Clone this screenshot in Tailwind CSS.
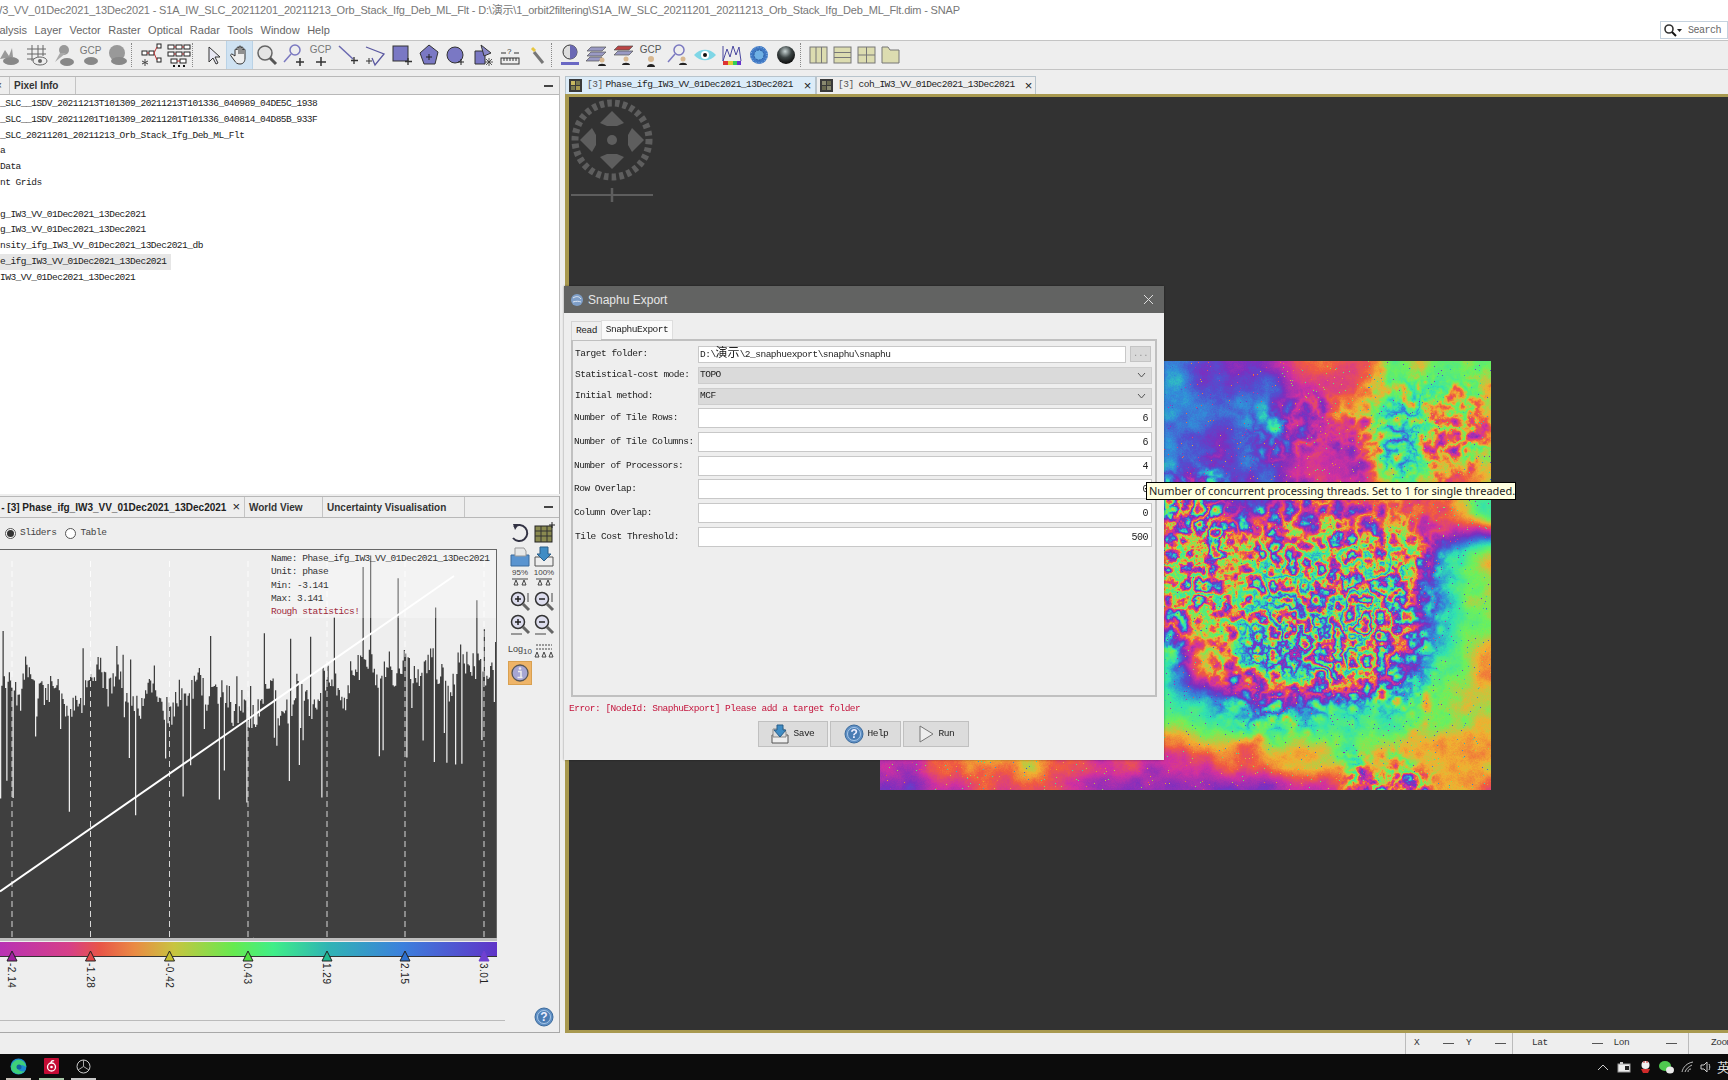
<!DOCTYPE html>
<html lang="en">
<head>
  <meta charset="UTF-8" />
  <title>SNAP</title>
  <script src="https://cdn.jsdelivr.net/npm/@tailwindcss/browser@4"></script>
</head>
<body class="bg-[#eeeeee]">
<div class="w-[1728px] h-[1080px] overflow-hidden flex flex-col bg-[#eeeeee] text-[#222] text-[9.5px] tracking-[-0.5px] font-['Liberation_Mono','Noto_Sans_CJK_SC',monospace]">

  <!-- title bar -->
  <div class="h-5 bg-white flex items-center whitespace-nowrap overflow-hidden text-[#777] text-[11px] tracking-[-0.17px] font-['Liberation_Sans','Noto_Sans_CJK_SC',sans-serif]">
    <span class="ml-[-8px]">W3_VV_01Dec2021_13Dec2021 - S1A_IW_SLC_20211201_20211213_Orb_Stack_Ifg_Deb_ML_Flt - D:\演示\1_orbit2filtering\S1A_IW_SLC_20211201_20211213_Orb_Stack_Ifg_Deb_ML_Flt.dim - SNAP</span>
  </div>

  <!-- menu bar -->
  <div class="h-5 bg-white flex items-center justify-between">
    <div class="flex gap-[7.5px] text-[#666] text-[11px] tracking-normal font-['Liberation_Sans',sans-serif]">
      <span class="ml-[-14px]">Analysis</span><span>Layer</span><span>Vector</span><span>Raster</span><span>Optical</span><span>Radar</span><span>Tools</span><span>Window</span><span>Help</span>
    </div>
    <div class="w-[68px] h-[18px] bg-white border border-[#c5d2de] flex items-center whitespace-nowrap overflow-hidden text-[#666] text-[10px]">
      <svg class="w-[20px] h-[14px] ml-[2px] shrink-0" viewBox="0 0 20 14"><circle cx="6" cy="6" r="4" fill="none" stroke="#333" stroke-width="1.6"/><path d="M9 9l4 4" stroke="#111" stroke-width="2"/><path d="M14 6h5l-2.500 3z" fill="#222"/></svg>
      <span class="ml-[5px]">Search (Ctrl+I)</span>
    </div>
  </div>

  <!-- toolbar -->
  <div class="h-[30px] border-y border-[#c4c4c4] flex items-center overflow-hidden shrink-0 text-[#777] tracking-normal font-['Liberation_Sans',sans-serif]">
    <div class="flex items-center ml-[-4px]">
      <div class="w-[27px] h-[27px] flex items-center justify-center"><svg class="w-6 h-6" viewBox="0 0 24 24"><path d="M2 16l5-9 4 6 3-8 1 9z" fill="#999"/><ellipse cx="13" cy="18" rx="8" ry="4" fill="#888"/></svg></div>
      <div class="w-[27px] h-[27px] flex items-center justify-center"><svg class="w-6 h-6" viewBox="0 0 24 24"><path d="M7 2v16M13 2v16M18 2v11M2 6h19M2 11h19M2 16h8" stroke="#666" fill="none"/><ellipse cx="15" cy="18" rx="7" ry="4" fill="#eee" stroke="#666"/><circle cx="15" cy="18" r="2" fill="#666"/></svg></div>
      <div class="w-[27px] h-[27px] flex items-center justify-center"><svg class="w-6 h-6" viewBox="0 0 24 24"><circle cx="12" cy="7" r="5" fill="#999"/><path d="M3 19l5-9h6z" fill="#aaa"/><ellipse cx="15" cy="19" rx="7" ry="4" fill="#888"/></svg></div>
      <div class="w-[27px] h-[27px] flex flex-col items-center justify-center"><span class="text-[10px] leading-[11px]">GCP</span><svg class="w-6 h-[10px]" viewBox="0 0 24 10"><ellipse cx="12" cy="5" rx="7" ry="4" fill="#888"/></svg></div>
      <div class="w-[27px] h-[27px] flex items-center justify-center"><svg class="w-6 h-6" viewBox="0 0 24 24"><circle cx="11" cy="10" r="8" fill="#999"/><ellipse cx="13" cy="18" rx="8" ry="4" fill="#888"/></svg></div>
      <div class="w-[7px] h-[24px] border-l border-dotted border-[#888]"></div>
      <div class="w-[27px] h-[27px] flex items-center justify-center"><svg class="w-6 h-6" viewBox="0 0 24 24"><g fill="#fff" stroke="#222"><rect x="2" y="8" width="5" height="4"/><rect x="9" y="8" width="5" height="4"/><rect x="17" y="1" width="4" height="4"/><rect x="17" y="15" width="4" height="4"/></g><path d="M14 10l3-6M14 10l3 7M7 10h2" stroke="#b33"/><path d="M5 16v7M2 18l6 3M8 18l-6 3" stroke="#444"/></svg></div>
      <div class="w-[27px] h-[27px] flex items-center justify-center"><svg class="w-6 h-6" viewBox="0 0 24 24"><g fill="#fff" stroke="#222"><rect x="1" y="2" width="6" height="4"/><rect x="9" y="2" width="6" height="4"/><rect x="17" y="2" width="6" height="4"/><rect x="1" y="9" width="6" height="4"/><rect x="9" y="9" width="6" height="4"/><rect x="17" y="9" width="6" height="4"/><rect x="4" y="16" width="6" height="4"/><rect x="13" y="16" width="6" height="4"/></g><path d="M7 4h2M15 4h2M7 11h2M15 11h2M10 18h3" stroke="#b33"/><path d="M6 23h2M11 23h2M16 23h2" stroke="#111" stroke-width="2"/></svg></div>
      <div class="w-[7px] h-[24px] border-l border-dotted border-[#888]"></div>
      <div class="w-[27px] h-[27px] flex items-center justify-center"><svg class="w-6 h-6" viewBox="0 0 24 24"><path d="M8 4v15l4-4 3 6 2-1-3-6h5z" fill="#e8e8f4" stroke="#333"/></svg></div>
      <div class="w-[27px] h-[30px] flex items-center justify-center bg-[#cfe2f2] border border-[#b9d2e6]"><svg class="w-6 h-6" viewBox="0 0 24 24"><path d="M7 13V7a1 1 0 012 0V5a1 1 0 012 0v-1a1 1 0 012 0v1a1 1 0 012 0v2a1 1 0 012 0v8c0 4-2 6-5 6-3 0-4-1-6-4l-3-4c-1-1 0-2 1-2z" fill="#eee" stroke="#333"/><path d="M11 5v6M13 5v6M15 6v5" stroke="#333"/></svg></div>
      <div class="w-[27px] h-[27px] flex items-center justify-center"><svg class="w-6 h-6" viewBox="0 0 24 24"><circle cx="10" cy="10" r="7" fill="#e4e4e4" stroke="#666" stroke-width="1.500"/><path d="M15 15l6 6" stroke="#555" stroke-width="3"/></svg></div>
      <div class="w-[27px] h-[27px] flex items-center justify-center"><svg class="w-6 h-6" viewBox="0 0 24 24"><circle cx="13" cy="7" r="5" fill="#eee" stroke="#7a78c0" stroke-width="1.500"/><path d="M9 11l-7 8" stroke="#7a78c0" stroke-width="1.500"/><path d="M18 15v8M14 19h8" stroke="#333" stroke-width="1.500"/></svg></div>
      <div class="w-[27px] h-[27px] flex flex-col items-center justify-center"><span class="text-[10px] leading-[11px]">GCP</span><svg class="w-6 h-[12px]" viewBox="0 0 24 12"><path d="M12 2v9M7 7h10" stroke="#333" stroke-width="1.500"/></svg></div>
      <div class="w-[27px] h-[27px] flex items-center justify-center"><svg class="w-6 h-6" viewBox="0 0 24 24"><path d="M3 3l14 13" stroke="#6a68b0" stroke-width="1.500"/><path d="M18 14v7M15 17.500h7" stroke="#333" stroke-width="1.300"/></svg></div>
      <div class="w-[27px] h-[27px] flex items-center justify-center"><svg class="w-6 h-6" viewBox="0 0 24 24"><path d="M3 4l18 7-9 11-3-7" fill="none" stroke="#5a58a0" stroke-width="1.300"/><path d="M6 15v6M3 18h6" stroke="#333"/></svg></div>
      <div class="w-[27px] h-[27px] flex items-center justify-center"><svg class="w-6 h-6" viewBox="0 0 24 24"><rect x="3" y="3" width="15" height="15" fill="#7a78c4" stroke="#333"/><path d="M18 15v7M15 18.500h7" stroke="#333" stroke-width="1.300"/></svg></div>
      <div class="w-[27px] h-[27px] flex items-center justify-center"><svg class="w-6 h-6" viewBox="0 0 24 24"><path d="M12 2l9 7-3 12H7L3 10z" fill="#7a78c4" stroke="#333"/><path d="M12 11v6M9 14h6" stroke="#222"/></svg></div>
      <div class="w-[27px] h-[27px] flex items-center justify-center"><svg class="w-6 h-6" viewBox="0 0 24 24"><circle cx="11" cy="12" r="8" fill="#7a78c4" stroke="#333"/><path d="M17 16v6M14 19h6" stroke="#222"/></svg></div>
      <div class="w-[27px] h-[27px] flex items-center justify-center"><svg class="w-6 h-6" viewBox="0 0 24 24"><path d="M4 8h10v13H4z" fill="#7a78c4" stroke="#333"/><path d="M10 2l10 8-7 3z" fill="#8a88c8" stroke="#333"/><path d="M18 15v8M14 19h8M15 16l6 6M21 16l-6 6" stroke="#333" stroke-width=".8"/></svg></div>
      <div class="w-[27px] h-[27px] flex items-center justify-center"><svg class="w-6 h-6" viewBox="0 0 24 24"><rect x="3" y="15" width="18" height="6" fill="#eee" stroke="#333"/><path d="M6 15v3M9 15v3M12 15v3M15 15v3M18 15v3M3 10h5M16 10h5" stroke="#333"/><text x="9" y="11" font-size="8" fill="#333">?</text></svg></div>
      <div class="w-[27px] h-[27px] flex items-center justify-center"><svg class="w-6 h-6" viewBox="0 0 24 24"><path d="M9 9l9 11" stroke="#777" stroke-width="3"/><path d="M7 5l3 3" stroke="#e6c640" stroke-width="3"/></svg></div>
      <div class="w-[7px] h-[24px] border-l border-dotted border-[#888] ml-[1px]"></div>
      <div class="w-[27px] h-[27px] ml-[-2px] flex items-center justify-center"><svg class="w-6 h-6" viewBox="0 0 24 24"><circle cx="12" cy="9" r="7" fill="#ddd" stroke="#333"/><path d="M12 2a7 7 0 010 14z" fill="#6a68b4"/><rect x="3" y="19" width="18" height="3" fill="#6a68c4"/></svg></div>
      <div class="w-[27px] h-[27px] flex items-center justify-center"><svg class="w-6 h-6" viewBox="0 0 24 24"><path d="M6 4h15l-4 4H2zM6 9h15l-4 4H2zM5 14h12l-3 4H1z" fill="#9a9ac4" stroke="#555" stroke-width=".7"/><circle cx="17" cy="17" r="2.500" fill="#d8b890"/><path d="M13 23c0-3 8-3 8 0z" fill="#222"/></svg></div>
      <div class="w-[27px] h-[27px] flex items-center justify-center"><svg class="w-6 h-6" viewBox="0 0 24 24"><path d="M6 3h15l-4 4H2z" fill="#b44" stroke="#555" stroke-width=".7"/><path d="M6 8h15l-4 4H2z" fill="#9a9ac4" stroke="#555" stroke-width=".7"/><circle cx="14" cy="16" r="2.500" fill="#d8b890"/><path d="M10 22c0-3 8-3 8 0z" fill="#222"/></svg></div>
      <div class="w-[27px] h-[27px] flex flex-col items-center justify-center"><span class="text-[10px] leading-[11px] text-[#555]">GCP</span><svg class="w-6 h-[12px]" viewBox="0 0 24 12"><circle cx="12" cy="4" r="3" fill="#d8b890"/><path d="M8 12c0-4 8-4 8 0z" fill="#222"/></svg></div>
      <div class="w-[27px] h-[27px] flex items-center justify-center"><svg class="w-6 h-6" viewBox="0 0 24 24"><circle cx="13" cy="7" r="5" fill="#eee" stroke="#7a78c0" stroke-width="1.500"/><path d="M9 11l-7 8" stroke="#7a78c0" stroke-width="1.500"/><circle cx="17" cy="16" r="2.500" fill="#d8b890"/><path d="M13 22c0-3 8-3 8 0z" fill="#222"/></svg></div>
      <div class="w-[27px] h-[27px] flex items-center justify-center"><svg class="w-6 h-6" viewBox="0 0 24 24"><path d="M1 12c6-7 16-7 22 0-6 7-16 7-22 0z" fill="#7fd6e6"/><circle cx="12" cy="12" r="4" fill="#fff"/><circle cx="12" cy="12" r="2" fill="#111"/></svg></div>
      <div class="w-[27px] h-[27px] flex items-center justify-center"><svg class="w-6 h-6" viewBox="0 0 24 24"><path d="M3 18V3M3 18L7 6l3 8 3-11 3 9 3-8 2 14" fill="none" stroke="#4a48a0"/><rect x="3" y="18" width="5" height="4" fill="#d33"/><rect x="8" y="18" width="5" height="4" fill="#dc3"/><rect x="13" y="18" width="4" height="4" fill="#3c5"/><rect x="17" y="18" width="4" height="4" fill="#63c"/></svg></div>
      <div class="w-[27px] h-[27px] flex items-center justify-center"><svg class="w-6 h-6" viewBox="0 0 24 24"><circle cx="12" cy="12" r="9" fill="#3f78c4"/><circle cx="12" cy="12" r="5" fill="#6fb0e4" stroke="#2a5a9c" stroke-dasharray="2 1"/><circle cx="12" cy="12" r="8" fill="none" stroke="#9cc4ea" stroke-dasharray="1 2"/></svg></div>
      <div class="w-[27px] h-[27px] flex items-center justify-center"><svg class="w-6 h-6" viewBox="0 0 24 24"><defs><radialGradient id="ball" cx=".45" cy=".3" r=".7"><stop offset="0" stop-color="#c8d4d4"/><stop offset=".5" stop-color="#3c4444"/><stop offset="1" stop-color="#0c0c0c"/></radialGradient></defs><circle cx="12" cy="12" r="9" fill="url(#ball)"/></svg></div>
      <div class="w-[7px] h-[24px] border-l border-dotted border-[#888] ml-[1px]"></div>
      <div class="w-[24px] h-[27px] flex items-center justify-center"><svg class="w-5 h-5" viewBox="0 0 20 20"><rect x="1" y="2" width="17" height="16" fill="#dcdcb0" stroke="#777"/><path d="M7 2v16M12.500 2v16" stroke="#777"/></svg></div>
      <div class="w-[24px] h-[27px] flex items-center justify-center"><svg class="w-5 h-5" viewBox="0 0 20 20"><rect x="1" y="2" width="17" height="16" fill="#dcdcb0" stroke="#777"/><path d="M1 7.500h17M1 12.500h17" stroke="#777"/></svg></div>
      <div class="w-[24px] h-[27px] flex items-center justify-center"><svg class="w-5 h-5" viewBox="0 0 20 20"><rect x="1" y="2" width="17" height="16" fill="#dcdcb0" stroke="#777"/><path d="M1 10h17M9.500 2v16" stroke="#777"/></svg></div>
      <div class="w-[24px] h-[27px] flex items-center justify-center"><svg class="w-5 h-5" viewBox="0 0 20 20"><path d="M1 2h6l2 3h9v13H1z" fill="#dcdcb0" stroke="#777"/></svg></div>
    </div>
  </div>

  <!-- panes -->
  <div class="flex-1 min-h-0 flex pt-[6px]">

    <!-- left column -->
    <div class="w-[560px] shrink-0 flex flex-col gap-[2px]">
      <div class="h-[418px] flex flex-col border-r border-[#bbb]">
        <div class="h-[19px] border-y border-[#b8b8b8] flex items-stretch text-[10px] font-bold tracking-normal text-[#333] font-['Liberation_Sans',sans-serif]">
          <span class="w-[9px] flex items-center font-normal overflow-hidden"><span class="ml-[-4px]">×</span></span>
          <span class="w-[67px] pl-[4px] flex items-center border-x border-[#c4c4c4]">Pixel Info</span>
          <span class="ml-auto mr-[6px] self-center w-[9px] h-[2px] bg-[#444]"></span>
        </div>
        <div class="flex-1 bg-white flex flex-col pt-[1px] leading-[15.800px] whitespace-nowrap overflow-hidden">
          <div>_SLC__1SDV_20211213T101309_20211213T101336_040989_04DE5C_1938</div>
          <div>_SLC__1SDV_20211201T101309_20211201T101336_040814_04D85B_933F</div>
          <div>_SLC_20211201_20211213_Orb_Stack_Ifg_Deb_ML_Flt</div>
          <div>a</div>
          <div>Data</div>
          <div>nt Grids</div>
          <div class="h-[15.800px]"></div>
          <div>g_IW3_VV_01Dec2021_13Dec2021</div>
          <div>g_IW3_VV_01Dec2021_13Dec2021</div>
          <div>nsity_ifg_IW3_VV_01Dec2021_13Dec2021_db</div>
          <div class="w-[171px] bg-[#e6e6e6]">e_ifg_IW3_VV_01Dec2021_13Dec2021</div>
          <div>IW3_VV_01Dec2021_13Dec2021</div>
        </div>
      </div>

      <div class="flex-1 min-h-0 flex flex-col border-r border-b border-[#a8a8a8]">
        <div class="h-[22px] shrink-0 border-y border-[#b8b8b8] flex items-stretch whitespace-nowrap text-[10px] font-bold tracking-normal text-[#222] font-['Liberation_Sans',sans-serif]">
          <div class="w-[245px] overflow-hidden flex items-center justify-end pr-[4px] border-r border-[#c4c4c4]"><span>on - [3] Phase_ifg_IW3_VV_01Dec2021_13Dec2021</span><span class="ml-[6px] font-normal text-[13px]">×</span></div>
          <div class="w-[78px] pl-[4px] flex items-center border-r border-[#c4c4c4] text-[#333]">World View</div>
          <div class="w-[142px] pl-[4px] flex items-center border-r border-[#c4c4c4] text-[#333]">Uncertainty Visualisation</div>
          <span class="ml-auto mr-[6px] self-center w-[9px] h-[2px] bg-[#444]"></span>
        </div>
        <div class="flex-1 min-h-0 flex">
          <div class="w-[505px] shrink-0 flex flex-col">
            <div class="h-[31px] shrink-0 flex items-center gap-[4px] pl-[5px] text-[#444]">
              <span class="w-[11px] h-[11px] rounded-full border border-[#555] bg-white flex items-center justify-center"><span class="w-[7px] h-[7px] rounded-full bg-[#333]"></span></span>
              <span>Sliders</span>
              <span class="w-[11px] h-[11px] rounded-full border border-[#555] bg-white ml-[5px]"></span>
              <span>Table</span>
            </div>
            <div class="relative h-[441px] shrink-0">
              <svg width="497" height="441" viewBox="0 0 497 441" class="block">
                <defs>
                  <linearGradient id="bar"><stop offset="0" stop-color="#b832b4"/><stop offset=".14" stop-color="#d64088"/><stop offset=".2" stop-color="#e85548"/><stop offset=".27" stop-color="#ea8a44"/><stop offset=".35" stop-color="#c8c440"/><stop offset=".47" stop-color="#66ea50"/><stop offset=".55" stop-color="#40ee88"/><stop offset=".66" stop-color="#30b4b4"/><stop offset=".81" stop-color="#3c80dc"/><stop offset="1" stop-color="#6034c8"/></linearGradient>
                </defs>
                <rect width="497" height="389" fill="#eeeeee"/>
                <path id="hist" fill="#3f3f3f" d=""/>
                <path d="M0 342.500L454 27" stroke="#fff" stroke-width="2" fill="none"/>
                <path d="M12 12V389M90.500 12V389M169.500 12V389M248 12V389M327 12V389M405 12V389M484 12V389" stroke="#fff" stroke-opacity=".8" stroke-dasharray="6 4" fill="none"/>
                <path d="M0 .500H497M496.500 0V389" stroke="#666" fill="none"/>
                <rect y="389" width="497" height="3" fill="#bdbdbd"/>
                <rect y="393" width="497" height="15" fill="url(#bar)"/>
                <path d="M0 407.500H497" stroke="#333"/>
                <g stroke="#222">
                  <path d="M12 402l5 10H7z" fill="#a020a0"/><path d="M90.500 402l5 10h-10z" fill="#e24848"/><path d="M169.500 402l5 10h-10z" fill="#c4c030"/><path d="M248 402l5 10h-10z" fill="#50e040"/><path d="M327 402l5 10h-10z" fill="#20b890"/><path d="M405 402l5 10h-10z" fill="#2c70d0"/><path d="M484 402l5 10h-10z" fill="#7040d0" stroke="#7040d0"/>
                </g>
                <g font-family="Liberation Sans" font-size="10" letter-spacing=".5" fill="#222">
                  <text transform="translate(8 414) rotate(90)">-2.14</text>
                  <text transform="translate(86.500 414) rotate(90)">-1.28</text>
                  <text transform="translate(165.500 414) rotate(90)">-0.42</text>
                  <text transform="translate(244 414) rotate(90)">0.43</text>
                  <text transform="translate(323 414) rotate(90)">1.29</text>
                  <text transform="translate(401 414) rotate(90)">2.15</text>
                  <text transform="translate(480 414) rotate(90)">3.01</text>
                </g>
              </svg>
              <div class="absolute left-[270px] top-[1px] w-[226px] h-[68px] bg-white/30 pl-[1px] pt-[2px] leading-[13.300px] text-[#333] whitespace-nowrap">
                <div>Name: Phase_ifg_IW3_VV_01Dec2021_13Dec2021</div>
                <div>Unit: phase</div>
                <div>Min: -3.141</div>
                <div>Max: 3.141</div>
                <div class="text-[#a02a3c]">Rough statistics!</div>
              </div>
            </div>
            <div class="h-[31px] border-b border-[#bbb]"></div>
          </div>

          <!-- histogram tools -->
          <div class="flex-1 flex flex-col pt-[3px] pl-[3px] text-[#444] tracking-normal font-['Liberation_Sans',sans-serif]">
            <div class="h-[24px] flex">
              <svg class="w-6 h-6" viewBox="0 0 24 24"><path d="M6 6a8 8 0 11-1 11" fill="none" stroke="#334" stroke-width="2"/><path d="M5 3l6 0-4 6z" fill="#334"/></svg>
              <svg class="w-6 h-6" viewBox="0 0 24 24"><rect x="3" y="5" width="17" height="16" fill="#8a8a50" stroke="#222"/><path d="M3 10h17M3 15h17M9 5v16M15 5v16" stroke="#333"/><path d="M20 1v6M17 4h6" stroke="#222"/></svg>
            </div>
            <div class="h-[23px] flex">
              <svg class="w-6 h-6" viewBox="0 0 24 24"><path d="M3 10h18v11H3z" fill="#5a94d0" stroke="#3a6a9c"/><path d="M7 3h9l2 3v5H7z" fill="#e8e8e8" stroke="#999"/></svg>
              <svg class="w-6 h-6" viewBox="0 0 24 24"><path d="M3 12h18v9H3z" fill="#eee" stroke="#555"/><path d="M8 2h8v7h3l-7 7-7-7h3z" fill="#3f8cc4" stroke="#2a5e88"/></svg>
            </div>
            <div class="h-[21px] flex">
              <div class="w-6 flex flex-col items-center text-[8px] leading-[9px]"><span>95%</span><svg class="w-5 h-[9px]" viewBox="0 0 20 9"><path d="M2 2h16M4 8l2-5 2 5zM12 8l2-5 2 5z" fill="none" stroke="#444"/></svg></div>
              <div class="w-6 flex flex-col items-center text-[8px] leading-[9px]"><span>100%</span><svg class="w-5 h-[9px]" viewBox="0 0 20 9"><path d="M2 2h16M4 8l2-5 2 5zM12 8l2-5 2 5z" fill="none" stroke="#444"/></svg></div>
            </div>
            <div class="h-[24px] flex">
              <svg class="w-6 h-6" viewBox="0 0 24 24"><circle cx="10" cy="10" r="6.500" fill="#dde" stroke="#333" stroke-width="1.500"/><path d="M7 10h6M10 7v6" stroke="#222" stroke-width="1.500"/><path d="M15 15l6 6" stroke="#666" stroke-width="3"/><path d="M20 4v9" stroke="#444"/></svg>
              <svg class="w-6 h-6" viewBox="0 0 24 24"><circle cx="10" cy="10" r="6.500" fill="#dde" stroke="#333" stroke-width="1.500"/><path d="M7 10h6" stroke="#222" stroke-width="1.500"/><path d="M15 15l6 6" stroke="#666" stroke-width="3"/><path d="M20 4v9" stroke="#444"/></svg>
            </div>
            <div class="h-[25px] flex">
              <svg class="w-6 h-6" viewBox="0 0 24 24"><circle cx="10" cy="9" r="6.500" fill="#dde" stroke="#333" stroke-width="1.500"/><path d="M7 9h6M10 6v6" stroke="#222" stroke-width="1.500"/><path d="M15 14l6 6" stroke="#666" stroke-width="3"/><path d="M3 21h11" stroke="#444"/></svg>
              <svg class="w-6 h-6" viewBox="0 0 24 24"><circle cx="10" cy="9" r="6.500" fill="#dde" stroke="#333" stroke-width="1.500"/><path d="M7 9h6" stroke="#222" stroke-width="1.500"/><path d="M15 14l6 6" stroke="#666" stroke-width="3"/><path d="M3 21h11" stroke="#444"/></svg>
            </div>
            <div class="h-[23px] flex items-center">
              <span class="w-6 text-[9px] leading-none text-center whitespace-nowrap">Log<sub class="text-[8px]">10</sub></span>
              <svg class="w-6 h-6" viewBox="0 0 24 24"><path d="M4 7h16M4 11h16" stroke="#444" stroke-dasharray="2 1"/><path d="M3 19l2-5 2 5zM10 19l2-5 2 5zM17 19l2-5 2 5z" fill="none" stroke="#444"/></svg>
            </div>
            <div class="w-[24px] h-[24px] bg-[#eeb468] border border-[#d9a050] flex items-center justify-center">
              <svg class="w-5 h-5" viewBox="0 0 20 20"><circle cx="10" cy="10" r="8" fill="#a6a6d4" stroke="#555" stroke-width="1.300"/><circle cx="10" cy="5.500" r="1.300" fill="#eee"/><path d="M8 8.500h3v6h1.500M7.500 14.500h3" stroke="#eee" stroke-width="1.500" fill="none"/></svg>
            </div>
            <svg class="w-[20px] h-[20px] mt-auto mb-[5px] ml-[26px]" viewBox="0 0 20 20"><circle cx="10" cy="10" r="9" fill="#5f8fc4" stroke="#3a6a9c"/><circle cx="10" cy="10" r="6.500" fill="#4a7cb4" stroke="#a8c8e8"/><text x="10" y="14" text-anchor="middle" font-size="12" font-weight="700" fill="#eef">?</text></svg>
          </div>
        </div>
      </div>
    </div>

    <!-- document area -->
    <div class="ml-[5px] flex-1 min-w-0 flex flex-col">
      <div class="h-[18px] shrink-0 flex items-stretch whitespace-nowrap text-[#222]">
        <div class="w-[251px] bg-[#dcecf8] border border-b-0 border-[#b8c4cc] flex items-center pl-[3px]">
          <svg class="w-[13px] h-[13px]" viewBox="0 0 13 13"><rect width="13" height="13" fill="#3a3a3a"/><path d="M2 2h4v4H2z" fill="#c8b860"/><path d="M7 2h4v4H7z" fill="#7a7a50"/><path d="M2 7h4v4H2z" fill="#7a7a50"/><path d="M7 7h4v4H7z" fill="#a89a50"/></svg>
          <span class="ml-[5px] text-[#555]">[3]</span><span class="ml-[3px]">Phase_ifg_IW3_VV_01Dec2021_13Dec2021</span>
          <span class="ml-[11px] text-[13px] tracking-normal font-['Liberation_Sans',sans-serif]">×</span>
        </div>
        <div class="w-[220px] bg-[#eeeeee] border border-b-0 border-[#b8c4cc] flex items-center pl-[3px]">
          <svg class="w-[13px] h-[13px]" viewBox="0 0 13 13"><rect width="13" height="13" fill="#3a3a3a"/><path d="M2 2h4v4H2z" fill="#8a8a70"/><path d="M7 2h4v4H7z" fill="#6a6a50"/><path d="M2 7h4v4H2z" fill="#6a6a50"/><path d="M7 7h4v4H7z" fill="#8a8a70"/></svg>
          <span class="ml-[5px] text-[#555]">[3]</span><span class="ml-[5px]">coh_IW3_VV_01Dec2021_13Dec2021</span>
          <span class="ml-[10px] text-[13px] tracking-normal font-['Liberation_Sans',sans-serif]">×</span>
        </div>
      </div>

      <div class="relative flex-1 min-h-0 bg-[#323232] border-l-[4px] border-t-[3px] border-b-[3px] border-[#a8994f]">
        <svg class="absolute left-[1px] top-[2px]" width="84" height="106" viewBox="0 0 84 106">
          <circle cx="42" cy="41" r="37" fill="none" stroke="#5e5e5e" stroke-width="7" stroke-dasharray="4.500 3.200"/>
          <g fill="#5e5e5e"><path d="M42 12L54 24 47 27H37L30 24z"/><path d="M42 70L30 58 37 55H47L54 58z"/><path d="M10 41L22 29 26 36V46L22 53z"/><path d="M74 41L62 29 58 36V46L62 53z"/><circle cx="42" cy="41" r="5"/></g>
          <path d="M1 96H83" stroke="#5e5e5e" stroke-width="2"/><path d="M42 89v14" stroke="#5e5e5e" stroke-width="2.500"/>
        </svg>

        <canvas id="ifg" width="611" height="429" class="absolute left-[311px] top-[264px] w-[611px] h-[429px]"></canvas>

        <!-- snaphu export dialog -->
        <div class="absolute left-[-5px] top-[189px] w-[600px] h-[474px] bg-[#eeeeee] flex flex-col shadow-[0_0_2px_rgba(0,0,0,0.4)]">
          <div class="h-[27px] shrink-0 bg-[#626362] flex items-center pl-[7px] pr-[10px] text-[#e6e6e6] text-[12px] tracking-normal font-['Liberation_Sans',sans-serif]">
            <svg class="w-[12px] h-[12px]" viewBox="0 0 12 12"><circle cx="6" cy="6" r="6" fill="#7f9fc8"/><path d="M2 4c3-2 6-2 8 1M2 8c3-1 6-1 8 0" stroke="#dfe8f4" fill="none"/></svg>
            <span class="ml-[5px]">Snaphu Export</span>
            <svg class="ml-auto w-[11px] h-[11px]" viewBox="0 0 11 11"><path d="M1 1l9 9M10 1l-9 9" stroke="#ddd"/></svg>
          </div>
          <div class="h-[19px] shrink-0 flex items-stretch pl-[7px] pt-[7px] box-content">
            <div class="w-[30px] flex items-center justify-center bg-[#eeeeee] border-t border-l border-[#d4d4d4] translate-y-[1px]">Read</div>
            <div class="w-[72px] flex items-center justify-center bg-[#fafafa] border-t border-x border-[#dedede]">SnaphuExport</div>
          </div>
          <div class="mx-[7px] h-[358px] shrink-0 border-2 border-[#c0c0c0] pt-[5px] pl-[1px] pr-[1px] flex flex-col whitespace-nowrap">
            <div class="flex h-[16px] mb-[5px] items-center">
              <span class="w-[124px] pl-[1px] shrink-0">Target folder:</span>
              <div class="w-[428px] h-[17px] bg-white border border-[#c8c8c8] flex items-center pl-[1px]"><span>D:\<span class="text-[12px] tracking-normal">演示</span>\2_snaphuexport\snaphu\snaphu</span></div>
              <div class="ml-[4px] w-[21px] h-[16px] bg-[#d8d8d8] border border-[#c4c4c4] flex items-center justify-center text-[#999]">...</div>
            </div>
            <div class="flex h-[16px] mb-[5px] items-center">
              <span class="w-[124px] pl-[1px] shrink-0">Statistical-cost mode:</span>
              <div class="w-[454px] h-[17px] bg-[#dadada] border border-[#cdcdcd] flex items-center justify-between px-[1px]"><span>TOPO</span><svg class="w-[9px] h-[6px] mr-[4px]" viewBox="0 0 9 6"><path d="M1 1l3.500 4L8 1" fill="none" stroke="#555"/></svg></div>
            </div>
            <div class="flex h-[16px] mb-[4px] items-center">
              <span class="w-[124px] pl-[1px] shrink-0">Initial method:</span>
              <div class="w-[454px] h-[17px] bg-[#dadada] border border-[#cdcdcd] flex items-center justify-between px-[1px]"><span>MCF</span><svg class="w-[9px] h-[6px] mr-[4px]" viewBox="0 0 9 6"><path d="M1 1l3.500 4L8 1" fill="none" stroke="#555"/></svg></div>
            </div>
            <div class="flex h-[20px] mb-[4px] items-center">
              <span class="w-[124px] shrink-0">Number of Tile Rows:</span>
              <div class="w-[454px] h-[20px] bg-white border border-[#c8c8c8] flex items-center justify-end pr-[3px] text-[10px]">6</div>
            </div>
            <div class="flex h-[20px] mb-[4px] items-center">
              <span class="w-[124px] shrink-0">Number of Tile Columns:</span>
              <div class="w-[454px] h-[20px] bg-white border border-[#c8c8c8] flex items-center justify-end pr-[3px] text-[10px]">6</div>
            </div>
            <div class="flex h-[20px] mb-[3px] items-center">
              <span class="w-[124px] shrink-0">Number of Processors:</span>
              <div class="w-[454px] h-[20px] bg-white border border-[#c8c8c8] flex items-center justify-end pr-[3px] text-[10px]">4</div>
            </div>
            <div class="flex h-[20px] mb-[4px] items-center">
              <span class="w-[124px] shrink-0">Row Overlap:</span>
              <div class="w-[454px] h-[20px] bg-white border border-[#c8c8c8] flex items-center justify-end pr-[3px] text-[10px]">0</div>
            </div>
            <div class="flex h-[20px] mb-[4px] items-center">
              <span class="w-[124px] shrink-0">Column Overlap:</span>
              <div class="w-[454px] h-[20px] bg-white border border-[#c8c8c8] flex items-center justify-end pr-[3px] text-[10px]">0</div>
            </div>
            <div class="flex h-[20px] items-center">
              <span class="w-[124px] pl-[1px] shrink-0">Tile Cost Threshold:</span>
              <div class="w-[454px] h-[20px] bg-white border border-[#c8c8c8] flex items-center justify-end pr-[3px] text-[10px]">500</div>
            </div>
          </div>
          <div class="h-[24px] shrink-0 flex items-center pl-[5px] pt-[1px] text-[#c4143c]">Error: [NodeId: SnaphuExport] Please add a target folder</div>
          <div class="flex justify-center gap-[2px] ml-[-2px]">
            <div class="w-[70px] h-[26px] bg-[#dcdcdc] border border-[#c0c0c0] flex items-center pl-[11px] gap-[4px]"><svg class="w-[20px] h-[20px]" viewBox="0 0 20 20"><path d="M2 11h16v8H2z" fill="#eee" stroke="#555"/><path d="M3 5h11l2 3v5H3z" fill="#dcdcdc" stroke="#888"/><path d="M7 1h6v5h3l-6 7-6-7h3z" fill="#3f8cc4" stroke="#2a5e88"/></svg><span>Save</span></div>
            <div class="w-[71px] h-[26px] bg-[#dcdcdc] border border-[#c0c0c0] flex items-center pl-[13px] gap-[4px]"><svg class="w-[20px] h-[20px]" viewBox="0 0 20 20"><circle cx="10" cy="10" r="9" fill="#5f8fc4" stroke="#3a6a9c"/><circle cx="10" cy="10" r="6.500" fill="#4a7cb4" stroke="#a8c8e8"/><text x="10" y="14" text-anchor="middle" font-size="12" font-weight="700" fill="#eef" font-family="Liberation Sans">?</text></svg><span>Help</span></div>
            <div class="w-[66px] h-[26px] bg-[#dcdcdc] border border-[#c0c0c0] flex items-center pl-[15px] gap-[5px]"><svg class="w-[15px] h-[18px]" viewBox="0 0 15 18"><path d="M1 1l13 8-13 8z" fill="#eee" stroke="#777"/></svg><span>Run</span></div>
          </div>
        </div>

        <!-- tooltip -->
        <div class="absolute left-[577px] top-[385px] w-[370px] h-[18px] bg-[#ffffe1] border border-black flex items-center pl-[2px] whitespace-nowrap text-[#222] text-[11px] tracking-normal font-['Noto_Sans',sans-serif]">Number of concurrent processing threads. Set to 1 for single threaded.</div>
      </div>
    </div>
  </div>

  <!-- status bar -->
  <div class="h-[21px] shrink-0 flex items-center justify-end text-[#333] whitespace-nowrap">
    <div class="w-[107px] h-[21px] border-l border-[#bbb] flex items-center pl-[8px]"><span class="w-[7px]">X</span><span class="w-[11px] h-px bg-[#555] ml-[22px]"></span><span class="ml-[12px]">Y</span><span class="w-[11px] h-px bg-[#555] ml-[24px]"></span></div>
    <div class="w-[176px] h-[21px] border-l border-[#bbb] flex items-center pl-[19px]"><span>Lat</span><span class="w-[11px] h-px bg-[#555] ml-[44px]"></span><span class="ml-[11px]">Lon</span><span class="w-[11px] h-px bg-[#555] ml-[37px]"></span></div>
    <div class="w-[40px] h-[21px] border-l border-[#bbb] flex items-center pl-[22px] overflow-hidden"><span>Zoom</span></div>
  </div>

  <!-- windows taskbar -->
  <div class="h-[26px] shrink-0 bg-[#0c0c0c] flex items-center relative">
    <div class="flex ml-[6px] h-full">
      <div class="w-[25px] mr-[8px] h-full flex items-center justify-center border-b-2 border-[#c8c0b8]"><svg class="w-[17px] h-[17px]" viewBox="0 0 17 17"><circle cx="8.500" cy="8.500" r="8" fill="#1c8ad0"/><path d="M1 9c1-5 5-8 9-7 4 1 6 4 6 7-3-3-8-2-8 1 0 3 4 4 7 3-3 3-7 4-10 2-3-1-4-3-4-6z" fill="#3ed07a"/><circle cx="9" cy="9" r="2.500" fill="#12629c"/></svg></div>
      <div class="w-[25px] mr-[7px] h-full flex items-center justify-center border-b-2 border-[#a8c8a8]"><svg class="w-[15px] h-[16px]" viewBox="0 0 15 16"><rect width="15" height="16" rx="1" fill="#c40c34"/><circle cx="7.500" cy="9" r="4" fill="none" stroke="#fff" stroke-width="1.300"/><path d="M7 5c0-2 2-3 3-2" fill="none" stroke="#fff" stroke-width="1.300"/><circle cx="7.500" cy="9" r="1.300" fill="#fff"/></svg></div>
      <div class="w-[25px] h-full flex items-center justify-center border-b-2 border-[#c8c8c8]"><svg class="w-[15px] h-[15px]" viewBox="0 0 15 15"><circle cx="7.500" cy="7.500" r="6.500" fill="none" stroke="#ccc"/><path d="M7.500 7.500V1M7.500 7.500L2 11M7.500 7.500l5.500 3.500" stroke="#aaa"/></svg></div>
    </div>
    <div class="ml-auto flex items-center h-full text-[#ddd] text-[13px] tracking-normal font-['Noto_Sans_CJK_SC',sans-serif]">
      <svg class="w-[12px] h-[8px]" viewBox="0 0 12 8"><path d="M1 7l5-5 5 5" fill="none" stroke="#ccc"/></svg>
      <svg class="w-[15px] h-[12px] ml-[8px]" viewBox="0 0 15 12"><rect x="1" y="3" width="12" height="8" fill="#eee" stroke="#999"/><path d="M3 1h3v2H3z" fill="#ccc"/><rect x="8" y="5" width="4" height="4" fill="#222"/></svg>
      <svg class="w-[13px] h-[14px] ml-[7px]" viewBox="0 0 13 14"><circle cx="6.500" cy="5" r="4" fill="#eee"/><path d="M2 9h9l-2 4H4z" fill="#d02a2a"/><path d="M5 1v2M8 1v2" stroke="#d02a2a"/></svg>
      <svg class="w-[15px] h-[14px] ml-[7px]" viewBox="0 0 15 14"><ellipse cx="6" cy="6" rx="6" ry="5" fill="#4fc84f"/><ellipse cx="11" cy="10" rx="4" ry="3.500" fill="#eaeaea"/></svg>
      <svg class="w-[13px] h-[12px] ml-[7px]" viewBox="0 0 13 12"><path d="M1 11c1-5 5-9 11-10M4 11c1-3 3-5 7-7M7 11c0-2 1-3 3-3" fill="none" stroke="#bbb"/></svg>
      <svg class="w-[12px] h-[12px] ml-[6px]" viewBox="0 0 12 12"><path d="M1 4h3l3-3v10L4 8H1z" fill="none" stroke="#ccc"/><path d="M9 3c1 2 1 4 0 6" fill="none" stroke="#ccc"/></svg>
      <span class="ml-[5px] w-[11px] overflow-hidden whitespace-nowrap">英</span>
    </div>
  </div>
</div>

<script>
  // seeded random so the picture stays the same
  let seed = 12345;
  function rnd() {
    seed = (seed * 1664525 + 1013904223) >>> 0;
    return seed / 4294967296;
  }

  // value noise, used by the histogram and the interferogram
  const perm = new Float32Array(65536);
  for (let i = 0; i < 65536; i++) perm[i] = rnd();
  function lat(ix, iy) { return perm[((ix & 255) * 256 + (iy & 255)) & 65535]; }
  function vnoise(x, y) {
    const ix = Math.floor(x), iy = Math.floor(y);
    let fx = x - ix, fy = y - iy;
    fx = fx * fx * (3 - 2 * fx); fy = fy * fy * (3 - 2 * fy);
    const a = lat(ix, iy), b = lat(ix + 1, iy), c = lat(ix, iy + 1), e = lat(ix + 1, iy + 1);
    return a + (b - a) * fx + (c - a) * fy + (a - b - c + e) * fx * fy;
  }
  function fbm(x, y, n) {
    let s = 0, amp = 0.5;
    for (let i = 0; i < n; i++) { s += amp * vnoise(x, y); x = x * 2.03 + 17; y = y * 2.03 + 9; amp *= 0.5; }
    return s;
  }

  // histogram bars
  let d = "";
  for (let x = 0; x < 496; x += 1.25) {
    let mid = x < 250 ? 138 + x * 0.05 : 150 - (x - 250) * 0.14;
    mid += (vnoise(x / 9, 3) - 0.5) * 50;
    let top = mid + (rnd() - 0.5) * 30;
    const r = rnd();
    if (r < 0.06) top = mid - 30 - rnd() * 75;
    else if (r < 0.13) top = mid + 25 + rnd() * 95;
    d += `M${x} ${top.toFixed(1)}H${x + 1.25}V389H${x}Z`;
  }
  document.getElementById("hist").setAttribute("d", d);

  // interferogram: coarse phase grid + fractal noise where the fringes are dense
  const colsX = [880, 1020, 1100, 1163, 1210, 1257, 1304, 1351, 1398, 1445, 1491];
  const rowsY = [361, 410, 460, 510, 560, 610, 660, 710, 760, 790];
  const grid = [
    [.82, .82, .82, .82, .9, .95, 1.25, 1.2, 1.5, 1.6, 1.55],
    [.85, .85, .85, .85, .9, .82, 1.05, 1.3, 1.6, 1.35, 1.45],
    [.8, .8, .8, .8, .95, .9, 1.15, 1.05, 1.7, 1.25, 1.4],
    [1, 1, 1, 1, .95, .95, 1.1, 1.2, 1.3, 1.25, 1.65],
    [1.1, 1.1, 1.1, 1.1, 1, 1.2, 1.2, 1.1, 1.3, .8, .4],
    [1.15, 1.15, 1.15, 1.15, 1.2, 1.3, 1.4, 1.3, 1.1, .72, .5],
    [.7, .7, .7, .7, 1.4, 1.5, 1.5, 1.3, .9, .62, .42],
    [.65, .65, .65, .65, .72, .78, .72, .68, .62, .5, .4],
    [.08, .42, .14, .22, .26, .3, .42, .52, .45, .4, .42],
    [.04, .3, .1, .04, .06, .02, .12, .28, .0, .4, .3]
  ];
  function locate(arr, v) {
    let i = 0;
    while (i < arr.length - 2 && v > arr[i + 1]) i++;
    let f = (v - arr[i]) / (arr[i + 1] - arr[i]);
    f = Math.max(0, Math.min(1, f));
    return [i, f * f * (3 - 2 * f)];
  }
  function base(x, y) {
    const [i, fx] = locate(colsX, x), [j, fy] = locate(rowsY, y);
    const a = grid[j][i] + (grid[j][i + 1] - grid[j][i]) * fx;
    const b = grid[j + 1][i] + (grid[j + 1][i + 1] - grid[j + 1][i]) * fx;
    return a + (b - a) * fy;
  }
  function blob(x, y, cx, cy, rx, ry) {
    const a = (x - cx) / rx, b = (y - cy) / ry;
    return Math.exp(-(a * a * a * a + b * b * b * b));
  }
  const stops = [[122, 47, 192], [208, 48, 160], [240, 90, 64], [240, 176, 48], [110, 240, 90], [48, 226, 176], [48, 144, 216], [80, 80, 208], [122, 47, 192]];
  const pos = [0, .17, .3, .42, .55, .7, .82, .92, 1];
  const cv = document.getElementById("ifg"), ctx = cv.getContext("2d");
  const img = ctx.createImageData(611, 429);
  for (let py = 0; py < 429; py++) {
    for (let px = 0; px < 611; px++) {
      const x = 880 + px, y = 361 + py;
      // warp the coordinates so the dense area gets a torn, branching edge
      const wx = x + 60 * (fbm(x / 45, y / 45, 3) - 0.44), wy = y + 60 * (fbm(x / 45 + 31, y / 45 + 5, 3) - 0.44);
      let dens = blob(wx, wy, 1325, 610, 105, 100) + blob(wx, wy, 1185, 560, 42, 75) * 0.9;
      dens += 0.4 * blob(wx, wy, 1435, 425, 70, 55) + 0.2 * blob(wx, wy, 1300, 425, 60, 30) + 0.7 * blob(wx, wy, 1385, 778, 40, 26);
      const ridge = 1 - Math.abs(2 * fbm(x / 15, y / 15, 5) - 0.94);
      let ph = base(x, y) + 0.32 * (fbm(x / 24, y / 24, 5) - 0.47);
      ph += dens * 2.6 * (ridge - 0.76);
      if (rnd() < 0.012) ph += rnd() * 0.5;
      ph += (rnd() - 0.5) * 0.03;
      ph -= Math.floor(ph);
      let k = 0;
      while (ph > pos[k + 1]) k++;
      const t = (ph - pos[k]) / (pos[k + 1] - pos[k]);
      const o = (py * 611 + px) * 4;
      for (let c = 0; c < 3; c++) img.data[o + c] = stops[k][c] + (stops[k + 1][c] - stops[k][c]) * t;
      img.data[o + 3] = 255;
    }
  }
  ctx.putImageData(img, 0, 0);
</script>
</body>
</html>
